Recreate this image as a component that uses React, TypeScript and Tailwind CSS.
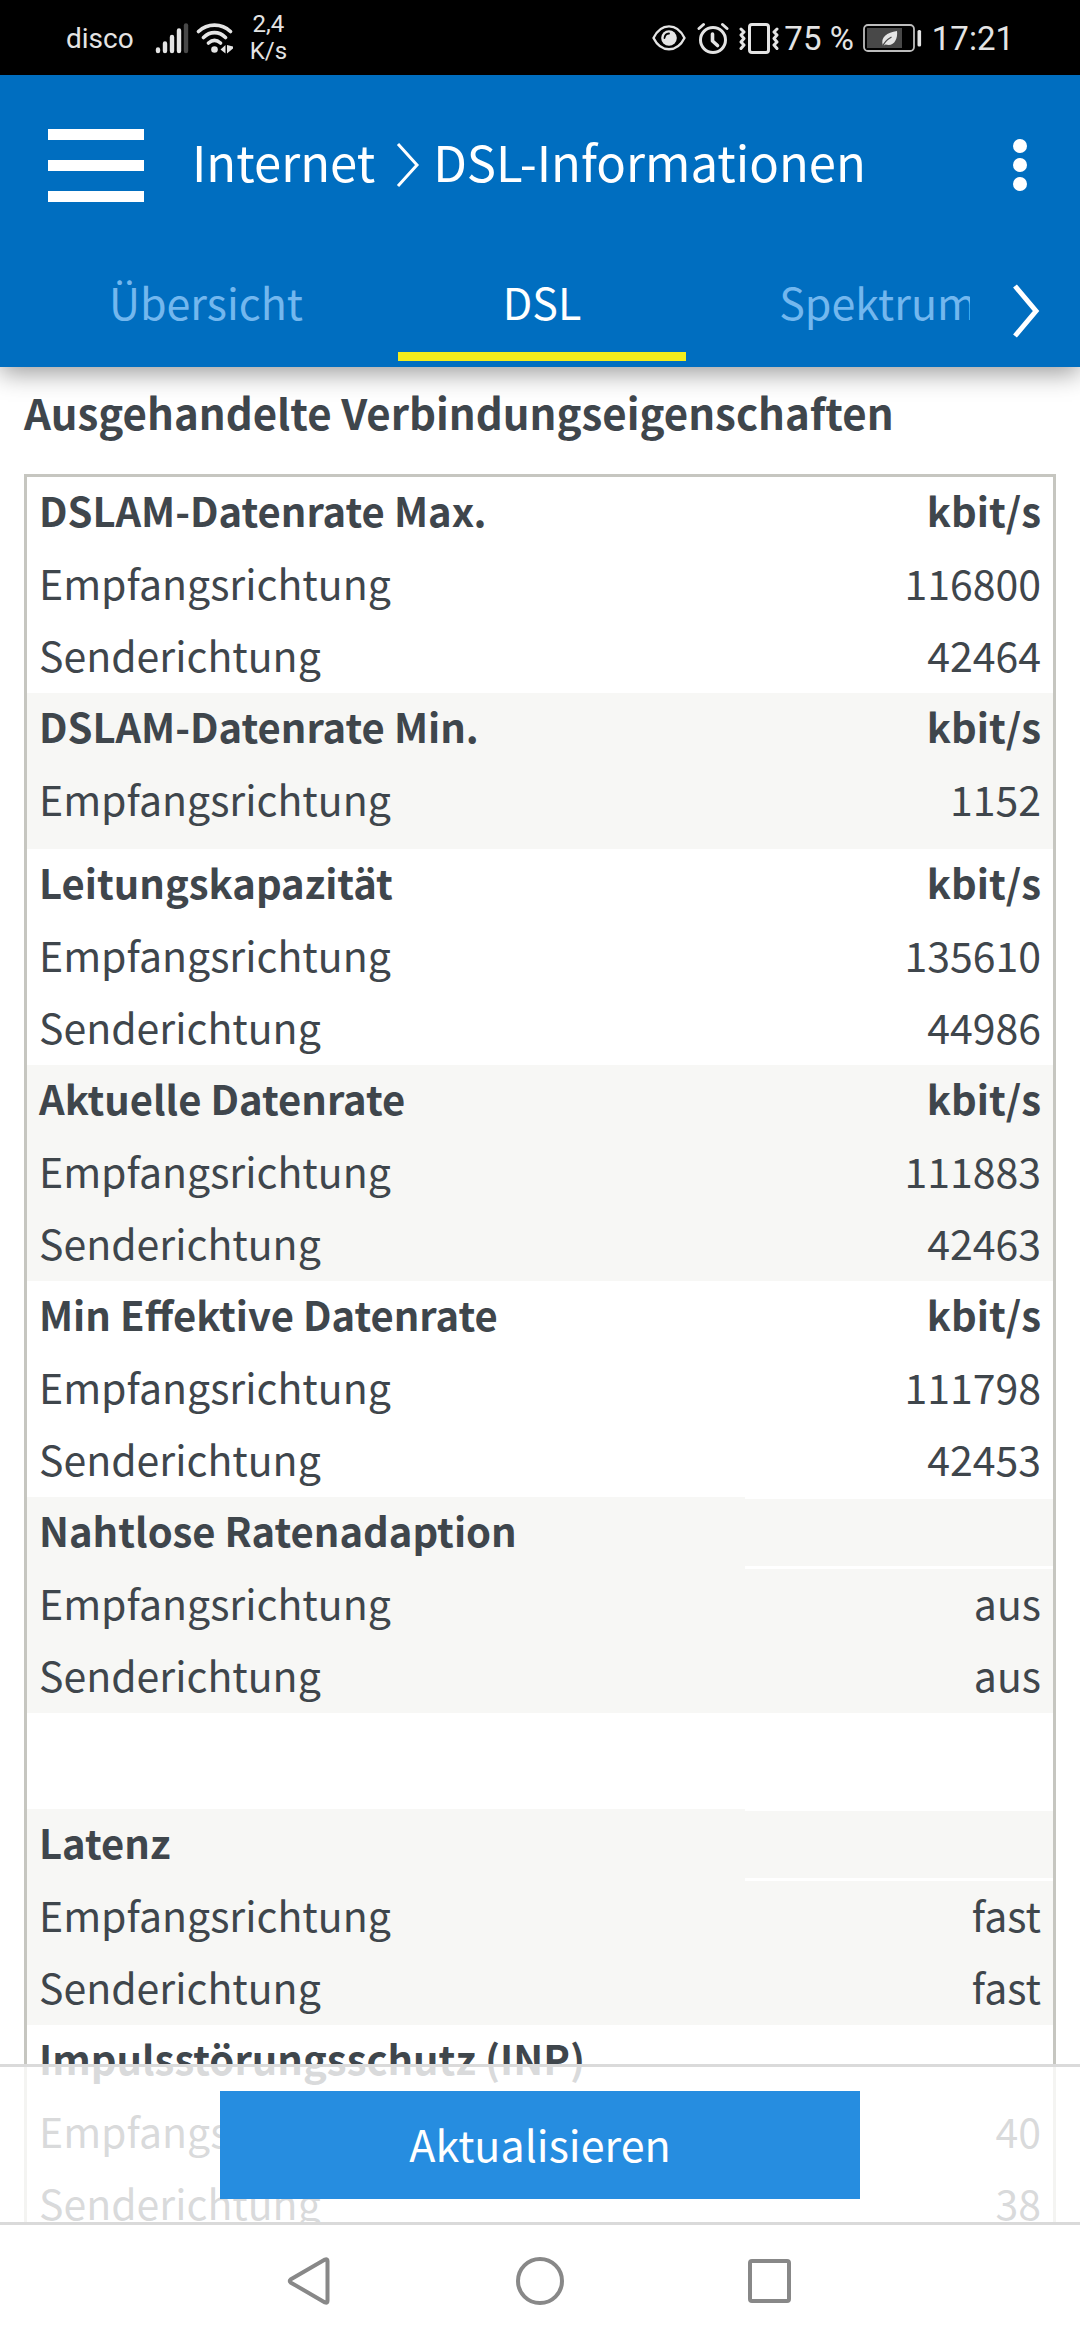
import { useState } from "react";
import clsx from "clsx";

type Row = { label: string; value: string };

type Group = {
  title: string;
  unit?: string;
  rows: Row[];
  striped?: boolean;
  padded?: boolean; // extra space under groups with a missing row
  spaceBefore?: boolean;
};

const TABS = ["Übersicht", "DSL", "Spektrum"];

const rx = (value: string): Row => ({ label: "Empfangsrichtung", value });
const tx = (value: string): Row => ({ label: "Senderichtung", value });

const GROUPS: Group[] = [
  { title: "DSLAM-Datenrate Max.", unit: "kbit/s", rows: [rx("116800"), tx("42464")] },
  { title: "DSLAM-Datenrate Min.", unit: "kbit/s", rows: [rx("1152")], striped: true, padded: true },
  { title: "Leitungskapazität", unit: "kbit/s", rows: [rx("135610"), tx("44986")] },
  { title: "Aktuelle Datenrate", unit: "kbit/s", rows: [rx("111883"), tx("42463")], striped: true },
  { title: "Min Effektive Datenrate", unit: "kbit/s", rows: [rx("111798"), tx("42453")] },
  { title: "Nahtlose Ratenadaption", rows: [rx("aus"), tx("aus")], striped: true },
  { title: "Latenz", rows: [rx("fast"), tx("fast")], striped: true, spaceBefore: true },
  { title: "Impulsstörungsschutz (INP)", rows: [rx("40"), tx("38")] },
];

const StatusBar = () => (
  <div className="flex h-[75px] shrink-0 items-center justify-between bg-black px-[66px] font-['Roboto',sans-serif] text-[#e4e4e4]">
    <div className="flex items-center">
      <span className="pt-[3px] text-[28px]">disco</span>
      {/* signal strength */}
      <svg className="ml-[21px]" width="34" height="32" viewBox="0 0 34 32" fill="none" stroke="currentColor" strokeWidth="4.4" strokeLinecap="round">
        <path d="M3 27.500V29M10 21.500V29M17 15V29M24 8.500V29" />
        <path d="M31 3.500V29" stroke="#484848" />
      </svg>
      {/* wifi with traffic arrows */}
      <svg className="ml-[7px]" width="38" height="32" viewBox="0 0 38 32" fill="none" stroke="currentColor" strokeWidth="3.600" strokeLinecap="round">
        <path d="M2.500 9.500C11.500 1 25.500 1 34.500 9.500M7.500 15.500C14 9 23 9 29.500 15.500M12.500 21C16.500 17.500 20.500 17.500 24.500 21" />
        <circle cx="18.500" cy="27.500" r="3.300" fill="currentColor" stroke="none" />
        <path d="M24.500 27.500L29.500 23V31.500ZM31 23V31.500L37 26.500V24.500Z" fill="currentColor" stroke="none" />
      </svg>
      <span className="ml-[16px] text-center text-[24px] leading-[27px]">
        2,4
        <br />
        K/s
      </span>
    </div>
    <div className="flex items-center">
      {/* eye comfort */}
      <svg width="34" height="28" viewBox="0 0 34 28" fill="none" stroke="currentColor" strokeWidth="2.400">
        <path d="M1.500 14C9 -1.500 25 -1.500 32.500 14C25 29 9 29 1.500 14Z" strokeLinejoin="round" />
        <circle cx="17" cy="14" r="7.800" fill="currentColor" stroke="none" />
        <path d="M12.500 14A5 5 0 0 1 17 9.500" stroke="#000" strokeWidth="1.800" strokeLinecap="round" />
      </svg>
      {/* alarm */}
      <svg className="ml-[11px]" width="32" height="32" viewBox="0 0 32 32" fill="none" stroke="currentColor" strokeWidth="3" strokeLinecap="round" strokeLinejoin="round">
        <circle cx="16" cy="18" r="12.500" />
        <path d="M2 6.500L6.500 2.500M30 6.500L25.500 2.500" />
        <path d="M15.500 12V19L20.500 23.500" strokeWidth="3.600" />
      </svg>
      {/* vibrate */}
      <svg className="ml-[10px]" width="40" height="32" viewBox="0 0 40 32" fill="none" stroke="currentColor" strokeWidth="3" strokeLinecap="round" strokeLinejoin="round">
        <rect x="10.500" y="2.500" width="19" height="28" rx="2.500" />
        <path d="M2 7L5 10L2 13L5 16.500L2 20L5 23L2 26.500" />
        <path d="M38 7L35 10L38 13L35 16.500L38 20L35 23L38 26.500" />
      </svg>
      <span className="ml-[5px] pt-[3px] text-[33px]">75 %</span>
      {/* battery saver */}
      <svg className="ml-[9px]" width="59" height="28" viewBox="0 0 59 28">
        <rect x="1" y="1" width="50" height="26" rx="4" fill="none" stroke="#bdbdbd" strokeWidth="1.800" />
        <rect x="4" y="4" width="35" height="20" fill="#484848" />
        <path d="M20 22C17 13 24 8.500 34 7C35 15 31 23 22.500 20.500Z" fill="#e4e4e4" />
        <path d="M19.500 23C21 18 25 15 28.500 13" fill="none" stroke="#484848" strokeWidth="1.300" />
        <rect x="54.500" y="6" width="3.600" height="16.500" rx="1.500" fill="#e4e4e4" />
      </svg>
      <span className="ml-[10px] pt-[3px] text-[33px]">17:21</span>
    </div>
  </div>
);

const Header = ({ active, onSelect }: { active: string; onSelect: (tab: string) => void }) => (
  <header className="relative z-10 shrink-0 bg-[#006ec0] text-white shadow-[0_6px_24px_rgba(0,0,0,0.4)]">
    <div className="flex h-[180px] items-center pr-[53px] pl-12">
      <button type="button" aria-label="Menü" className="flex w-24 flex-col gap-5">
        <span className="h-[11px] bg-white" />
        <span className="h-[11px] bg-white" />
        <span className="h-[11px] bg-white" />
      </button>
      <h1 className="ml-12 flex items-center text-[49px] leading-[60px]">
        <a href="#internet" className="pb-2">Internet</a>
        <svg className="mr-3 ml-5" width="26" height="46" viewBox="0 0 26 46" fill="none" stroke="currentColor" strokeWidth="3">
          <path d="M3 2L22 23L3 44" />
        </svg>
        <span className="pb-2">DSL-Informationen</span>
      </h1>
      <button type="button" aria-label="Mehr" className="ml-auto flex flex-col gap-[5px]">
        <span className="size-[14px] rounded-full bg-white" />
        <span className="size-[14px] rounded-full bg-white" />
        <span className="size-[14px] rounded-full bg-white" />
      </button>
    </div>
    <nav className="flex h-28">
      <div className="flex flex-1 gap-12 overflow-hidden pb-[6px] pl-[62px]">
        {TABS.map((tab) => (
          <button
            key={tab}
            type="button"
            onClick={() => onSelect(tab)}
            className={clsx(
              "w-72 shrink-0 border-b-[9px] pb-1 text-[43px]",
              tab === active ? "border-[#f4ec1c] text-white" : "border-transparent text-[#73b7ee]"
            )}
          >
            {tab}
          </button>
        ))}
      </div>
      <button type="button" aria-label="Weitere Reiter" className="flex w-[110px] shrink-0 items-center pl-[42px]">
        <svg width="30" height="56" viewBox="0 0 30 56" fill="none" stroke="currentColor" strokeWidth="5">
          <path d="M3 3L24 28L3 53" />
        </svg>
      </button>
    </nav>
  </header>
);

const GroupRows = ({ group }: { group: Group }) => {
  const bg = group.striped ? "bg-[#f7f7f5]" : "bg-white";
  return (
    <>
      {group.spaceBefore && (
        <tbody>
          <tr className="h-24">
            <td colSpan={2} />
          </tr>
        </tbody>
      )}
      <tbody className="leading-[66px]">
        <tr className="h-[72px] text-[40px]">
          <th scope="rowgroup" className={clsx("pb-[6px] pl-3 text-left font-bold", bg)}>
            {group.title}
          </th>
          <th
            className={clsx(
              "pr-3 text-right font-bold",
              bg,
              group.unit ? "pb-[6px]" : "border-t-2 border-b-3 border-white"
            )}
          >
            {group.unit}
          </th>
        </tr>
        {group.rows.map((row) => (
          <tr key={row.label} className="h-[72px] text-[41px]">
            <td className={clsx("pb-[6px] pl-3", bg)}>{row.label}</td>
            <td className={clsx("pr-3 pb-[6px] text-right", bg)}>{row.value}</td>
          </tr>
        ))}
        {group.padded && (
          <tr className="h-3">
            <td colSpan={2} className={bg} />
          </tr>
        )}
      </tbody>
    </>
  );
};

const SystemNav = () => (
  <div className="flex h-[115px] shrink-0 items-center justify-center gap-[182px] bg-white pb-1 text-[#888888]">
    <button type="button" aria-label="Zurück">
      <svg width="48" height="50" viewBox="0 0 48 50" fill="none" stroke="currentColor" strokeWidth="4" strokeLinejoin="round">
        <path d="M4.500 23.600Q3 25 4.500 26.400L39 46.500Q41.500 47.500 41.500 45V5Q41.500 2.500 39 3.500Z" />
      </svg>
    </button>
    <button type="button" aria-label="Startseite">
      <svg width="48" height="50" viewBox="0 0 48 50" fill="none" stroke="currentColor" strokeWidth="4">
        <circle cx="24" cy="25" r="22" />
      </svg>
    </button>
    <button type="button" aria-label="Letzte Apps">
      <svg width="48" height="50" viewBox="0 0 48 50" fill="none" stroke="currentColor" strokeWidth="4">
        <rect x="4" y="5" width="39" height="40" rx="2" />
      </svg>
    </button>
  </div>
);

const App = () => {
  const [activeTab, setActiveTab] = useState("DSL");

  return (
    <div className="flex h-screen flex-col bg-white font-['Noto_Sans_CJK_SC',sans-serif] text-[#3f464c]">
      <StatusBar />
      <Header active={activeTab} onSelect={setActiveTab} />
      <div className="relative min-h-0 flex-1">
        <main className="h-full overflow-y-auto px-6 pt-[15px] [scrollbar-width:none]">
          <h2 className="mb-8 text-[42px] leading-[60px] font-bold">Ausgehandelte Verbindungseigenschaften</h2>
          <table className="w-full table-fixed border-separate border-spacing-0 border-3 border-[#c6c6c0]">
            <colgroup>
              <col className="w-[70%]" />
              <col className="w-[30%]" />
            </colgroup>
            {GROUPS.map((group) => (
              <GroupRows key={group.title} group={group} />
            ))}
          </table>
        </main>
        {/* action bar floats over the scrolling table */}
        <div className="absolute inset-x-0 bottom-0 flex justify-center border-y-3 border-[#dadada] bg-white/80 pt-6 pb-[23px]">
          <button type="button" className="h-[108px] w-[640px] bg-[#268de0] pb-1 text-[43px] text-white">
            Aktualisieren
          </button>
        </div>
      </div>
      <SystemNav />
    </div>
  );
};

export default App;
